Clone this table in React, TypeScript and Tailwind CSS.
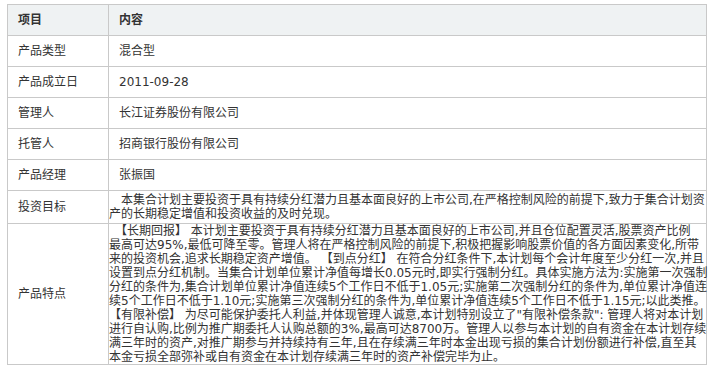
import React from "react";

const font = { fontFamily: '"DejaVu Sans", "Noto Sans CJK SC", sans-serif' };

const rows: [string, string][] = [
  ["产品类型", "混合型"],
  ["产品成立日", "2011-09-28"],
  ["管理人", "长江证券股份有限公司"],
  ["托管人", "招商银行股份有限公司"],
  ["产品经理", "张振国"],
];

const goalLines = [
  "　本集合计划主要投资于具有持续分红潜力且基本面良好的上市公司,在严格控制风险的前提下,致力于集合计划资",
  "产的长期稳定增值和投资收益的及时兑现。",
];

const featureLines = [
  "　【长期回报】 本计划主要投资于具有持续分红潜力且基本面良好的上市公司,并且仓位配置灵活,股票资产比例",
  "最高可达95%,最低可降至零。管理人将在严格控制风险的前提下,积极把握影响股票价值的各方面因素变化,所带",
  "来的投资机会,追求长期稳定资产增值。 【到点分红】 在符合分红条件下,本计划每个会计年度至少分红一次,并且",
  "设置到点分红机制。当集合计划单位累计净值每增长0.05元时,即实行强制分红。具体实施方法为:实施第一次强制",
  "分红的条件为,集合计划单位累计净值连续5个工作日不低于1.05元;实施第二次强制分红的条件为,单位累计净值连",
  "续5个工作日不低于1.10元;实施第三次强制分红的条件为,单位累计净值连续5个工作日不低于1.15元;以此类推。",
  "【有限补偿】 为尽可能保护委托人利益,并体现管理人诚意,本计划特别设立了\"有限补偿条款\": 管理人将对本计划",
  "进行自认购,比例为推广期委托人认购总额的3%,最高可达8700万。管理人以参与本计划的自有资金在本计划存续",
  "满三年时的资产,对推广期参与并持续持有三年,且在存续满三年时本金出现亏损的集合计划份额进行补偿,直至其",
  "本金亏损全部弥补或自有资金在本计划存续满三年时的资产补偿完毕为止。",
];

const cell = "border border-[#c9c9c9] px-[10px] py-[8px] align-middle";

export default function App() {
  return (
    <div className="bg-white w-[714px] h-[372px] pt-[4px] pl-[7px]" style={font}>
      <table className="w-[700px] border-collapse table-fixed text-[12px] leading-[14px] text-[#333]">
        <colgroup>
          <col className="w-[101px]" />
          <col />
        </colgroup>
        <tbody>
          <tr className="bg-[#eff2f3]">
            <td className={`${cell} font-bold`}>项目</td>
            <td className={`${cell} font-bold`}>内容</td>
          </tr>
          {rows.map(([k, v]) => (
            <tr key={k}>
              <td className={cell}>{k}</td>
              <td className={cell}>{v}</td>
            </tr>
          ))}
          <tr>
            <td className={cell}>投资目标</td>
            <td className="border border-[#c9c9c9] px-0 py-[2px] align-middle">
              {goalLines.map((l, i) => (
                <div key={i} className="whitespace-pre">
                  {l}
                </div>
              ))}
            </td>
          </tr>
          <tr>
            <td className={cell}>产品特点</td>
            <td className="border border-[#c9c9c9] px-0 py-0 align-middle">
              {featureLines.map((l, i) => (
                <div key={i} className="whitespace-pre">
                  {l}
                </div>
              ))}
            </td>
          </tr>
        </tbody>
      </table>
    </div>
  );
}
